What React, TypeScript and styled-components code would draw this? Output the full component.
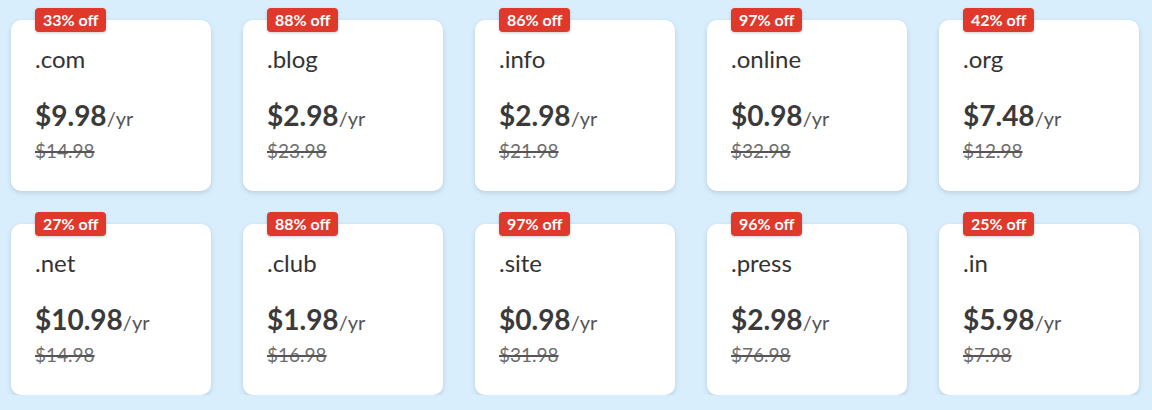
import React from 'react'
import styled, { createGlobalStyle } from 'styled-components'

const domains = [
  { tld: '.com', price: '$9.98', old: '$14.98', off: 33 },
  { tld: '.blog', price: '$2.98', old: '$23.98', off: 88 },
  { tld: '.info', price: '$2.98', old: '$21.98', off: 86 },
  { tld: '.online', price: '$0.98', old: '$32.98', off: 97 },
  { tld: '.org', price: '$7.48', old: '$12.98', off: 42 },
  { tld: '.net', price: '$10.98', old: '$14.98', off: 27 },
  { tld: '.club', price: '$1.98', old: '$16.98', off: 88 },
  { tld: '.site', price: '$0.98', old: '$31.98', off: 97 },
  { tld: '.press', price: '$2.98', old: '$76.98', off: 96 },
  { tld: '.in', price: '$5.98', old: '$7.98', off: 25 },
]

const GlobalStyle = createGlobalStyle`
  html, body {
    margin: 0;
    padding: 0;
    background: #d9eefc;
    font-family: Lato, "Open Sans", sans-serif;
  }
`

const Grid = styled.div`
  display: grid;
  grid-template-columns: repeat(5, 200px);
  column-gap: 32px;
  row-gap: 33px;
  padding: 20px 0 0 11px;
`

const Card = styled.div`
  position: relative;
  height: 171px;
  box-sizing: border-box;
  padding: 26px 24px 0 24px;
  background: #fff;
  border-radius: 10px;
  box-shadow: 0 2px 5px rgba(60, 90, 120, 0.2);
`

const Badge = styled.span`
  position: absolute;
  top: -12px;
  left: 24px;
  height: 24px;
  line-height: 24px;
  padding: 0 8px;
  border-radius: 4px;
  background: #e0382b;
  color: #fff;
  font-size: 16px;
  font-weight: 700;
  box-shadow: 0 1px 3px rgba(0, 0, 0, 0.2);
`

const Tld = styled.div`
  font-size: 24px;
  line-height: 26px;
  color: #333;
  margin-bottom: 26px;
`

const Price = styled.div`
  line-height: 34px;
  height: 34px;
  color: #3a3a3a;
`

const Amount = styled.span`
  font-size: 28px;
  font-weight: 700;
`

const Per = styled.span`
  font-size: 20px;
  line-height: 1;
  color: #555;
`

const Old = styled.div`
  margin-top: 8px;
  font-size: 19px;
  line-height: 22px;
  color: #6e6e6e;
  text-decoration: line-through;
  text-decoration-color: #555;
  text-decoration-thickness: 2px;
`

const App: React.FC = () => (
  <>
    <GlobalStyle />
    <Grid>
      {domains.map(d => (
        <Card key={d.tld}>
          <Badge>{d.off}% off</Badge>
          <Tld>{d.tld}</Tld>
          <Price>
            <Amount>{d.price}</Amount>
            <Per>/yr</Per>
          </Price>
          <Old>{d.old}</Old>
        </Card>
      ))}
    </Grid>
  </>
)

export default App
